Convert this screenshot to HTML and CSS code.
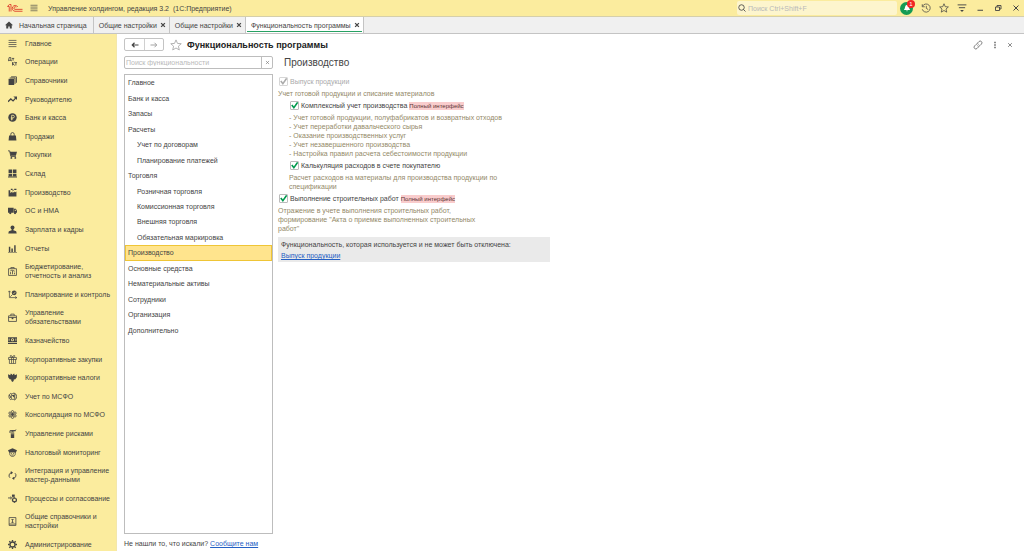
FILE: index.html
```html
<!DOCTYPE html>
<html lang="ru">
<head>
<meta charset="utf-8">
<meta name="viewport" content="width=device-width, initial-scale=1">
<title>Функциональность программы</title>
<link rel="stylesheet" href="styles.css">
</head>
<body>
<svg class="sprite" aria-hidden="true">
  <symbol id="menu" viewBox="0 0 16 16"><path d="M1 2.500h14M1 6.200h14M1 9.800h14M1 13.500h14" fill="none" stroke="currentColor" stroke-width="1.300"/></symbol>
  <symbol id="ops" viewBox="0 0 16 16"><path d="M0 7.500V6h1l1-5h3v5h1v1.500M1 6h4M7 2.500h4M9 2.500v4M8 9v6M12 9l-4 3 4 3M12 10h4M14 10v5" fill="none" stroke="currentColor" stroke-width="1.500"/></symbol>
  <symbol id="books" viewBox="0 0 16 16"><path d="M1 5h10v11H1z"/><path d="M3 3.500h9.500V14M5.500 1.500H15V12" fill="none" stroke="currentColor" stroke-width="1.600"/></symbol>
  <symbol id="trend" viewBox="0 0 16 16"><path d="M0 12l5-5 4 3.500L14 5" fill="none" stroke="currentColor" stroke-width="2.200"/><path d="M9.500 2.500H16V9z"/></symbol>
  <symbol id="coin" viewBox="0 0 16 16"><circle cx="8" cy="8" r="7.500"/><path d="M6.500 13V4h2.500a2.200 2.200 0 0 1 0 4.600H5M5 10.600h4" fill="none" stroke="#fbec9e" stroke-width="1.400"/></symbol>
  <symbol id="bag" viewBox="0 0 16 16"><path d="M2 6h12l1 9H1z"/><path d="M5 8V4a3 3 0 0 1 6 0v4" fill="none" stroke="currentColor" stroke-width="1.500"/></symbol>
  <symbol id="cart" viewBox="0 0 16 16"><path d="M3 3h13l-2 7H5z"/><path d="M0 1.500h3l2 10h9" fill="none" stroke="currentColor" stroke-width="1.500"/><circle cx="6" cy="14" r="1.700"/><circle cx="13" cy="14" r="1.700"/></symbol>
  <symbol id="store" viewBox="0 0 16 16"><path d="M1 1h6.300v6H1zM8.700 1H15v6H8.700zM1 8.300h6.300V13H1zM8.700 8.300H15V13H8.700zM0 13.500h16V15H0z"/></symbol>
  <symbol id="factory" viewBox="0 0 16 16"><path d="M1 15V4h3v5l4-3v3l4-3v2l3-2v9z"/><path d="M5 2.500h3M8 4h2M11 2.500h4" stroke="currentColor" stroke-width="2"/></symbol>
  <symbol id="truck" viewBox="0 0 16 16"><path d="M0 3h10v9H0zM10.500 5H14l2 3.500V12h-5.500z"/><circle cx="4" cy="12.500" r="2"/><circle cx="12.500" cy="12.500" r="2"/><path d="M12 6.500h1.500l1 2H12z" fill="#fbec9e"/></symbol>
  <symbol id="person" viewBox="0 0 16 16"><circle cx="8" cy="4.500" r="3.500"/><path d="M6.500 7h3v2.500l5 1.500 1 4H.5l1-4 5-1.500z"/></symbol>
  <symbol id="bars" viewBox="0 0 16 16"><path d="M1.500 5h2.600v9H1.500zM6 8h2.600v6H6zM11 2h2.600v12H11zM0 14h16v1.300H0z"/></symbol>
  <symbol id="plan" viewBox="0 0 16 16"><path d="M1 3h14v12H1zM5 3V1h6v2M4.500 13V9M8 13V7M11.500 13v-3M4 7l3-1.500 5 2" fill="none" stroke="currentColor" stroke-width="1.400"/></symbol>
  <symbol id="target" viewBox="0 0 16 16"><path d="M2.500 2v11.500H16M.5 4l2-2.500 2 2.500M13 11.500l2.500 2-2.500 2M4 12l4-4" fill="none" stroke="currentColor" stroke-width="1.300"/><circle cx="11" cy="5" r="4.300"/><path d="M9 5l1.500 1.500L13.500 3" fill="none" stroke="#fbec9e" stroke-width="1.200"/></symbol>
  <symbol id="case" viewBox="0 0 16 16"><path d="M1 5h14v10H1zM5 5V2h6v3M1 8h14" fill="none" stroke="currentColor" stroke-width="1.400"/><path d="M6.500 8h3v3h-3z"/></symbol>
  <symbol id="cash" viewBox="0 0 16 16"><path d="M0 2h16v9H0zM0 12.500h16V14H0z"/><circle cx="8" cy="6.500" r="2.700" fill="#fbec9e"/><circle cx="8" cy="6.500" r="1.300"/><path d="M2 4.500v4M14 4.500v4" stroke="#fbec9e" stroke-width="1.400"/></symbol>
  <symbol id="gift" viewBox="0 0 16 16"><path d="M1 4.500h14V8H1zM2.500 8v7.300h11V8M6.300 5v10M9.700 5v10M8 4C3 4 3 .7 5 .7S8 4 8 4s1-3.300 3-3.300S13 4 8 4z" fill="none" stroke="currentColor" stroke-width="1.300"/></symbol>
  <symbol id="eagle" viewBox="0 0 16 16"><path d="M0 2l4 2 1-3 2 1 1 2 1-2 2-1 1 3 4-2-.5 6-3 3.500-2-.5L10 14l-2 2-2-2-.5-3-2 .5-3-3.500z"/></symbol>
  <symbol id="globe" viewBox="0 0 16 16"><path d="M5 2A7 7 0 0 0 5 14M10 1.500a6.800 6.800 0 0 1 1 13M1.500 6l3 1.500v3" fill="none" stroke="currentColor" stroke-width="1.500"/><path d="M6 3h6v10H6z" fill="#fbec9e" stroke="currentColor" stroke-width="1.300"/><path d="M6.500 5.500l5 5v-5z"/></symbol>
  <symbol id="atom" viewBox="0 0 16 16"><circle cx="8" cy="8" r="2.500"/><g fill="none" stroke="currentColor" stroke-width="1.400"><circle cx="8" cy="3" r="2"/><circle cx="8" cy="13" r="2"/><circle cx="3.500" cy="5.500" r="2"/><circle cx="12.500" cy="5.500" r="2"/><circle cx="3.500" cy="10.500" r="2"/><circle cx="12.500" cy="10.500" r="2"/></g></symbol>
  <symbol id="risk" viewBox="0 0 16 16"><path d="M5 6h6v10H5zM6 2h4v3H6z"/><path d="M3.500 7V3H12l2-2M10 3h4" fill="none" stroke="currentColor" stroke-width="1.700"/><path d="M5 8.500h6" stroke="#fbec9e"/></symbol>
  <symbol id="officer" viewBox="0 0 16 16"><path d="M0 4l8-3.500L16 4l-2 4H2z"/><path d="M3 7v3c0 3 2 5 5 5s5-2 5-5V7M5 10h2M9 10h2M6 12.500h4" fill="none" stroke="currentColor" stroke-width="1.400"/></symbol>
  <symbol id="sync" viewBox="0 0 16 16"><path d="M6 3a5.300 5.300 0 0 0-2.500 9M10 13a5.300 5.300 0 0 0 2.500-9" fill="none" stroke="currentColor" stroke-width="1.700"/><path d="M5 0l4 3-4 3zM11 16l-4-3 4-3z"/></symbol>
  <symbol id="process" viewBox="0 0 16 16"><path d="M0 7h6M4 5l2.500 2L4 9M9 7V4" fill="none" stroke="currentColor" stroke-width="1.500"/><path d="M7 1h5v4H7z"/><circle cx="11.500" cy="10.500" r="3.500" fill="none" stroke="currentColor" stroke-width="2"/><path d="M11.500 5.500v3M11.500 12.500V16M6.500 10.500h3M13.500 10.500h2.500" stroke="currentColor" stroke-width="1.300"/></symbol>
  <symbol id="book" viewBox="0 0 16 16"><path d="M2 1h12v14H2zM2 12.500h12M6 4.500h4M8 4.500V10M6 9.500h4" fill="none" stroke="currentColor" stroke-width="1.400"/></symbol>
  <symbol id="gear" viewBox="0 0 16 16"><circle cx="8" cy="8" r="4.500" fill="none" stroke="currentColor" stroke-width="2.400"/><path d="M8 0v3M8 13v3M0 8h3M13 8h3M2.300 2.300l2.200 2.200M11.500 11.500l2.200 2.200M2.300 13.700l2.200-2.200M11.500 4.500l2.200-2.200" stroke="currentColor" stroke-width="2.400"/></symbol>
  <symbol id="star" viewBox="0 0 16 16"><path d="M8 1.200l2 4.700 5 .4-3.800 3.300 1.200 5L8 12l-4.400 2.600 1.200-5L1 6.300l5-.4z" fill="none" stroke="currentColor" stroke-width="1.200"/></symbol>
  <symbol id="close" viewBox="0 0 16 16"><path d="M3 3l10 10M13 3L3 13" fill="none" stroke="currentColor" stroke-width="2"/></symbol>
  <symbol id="bold-close" viewBox="0 0 16 16"><path d="M3 3l10 10M13 3L3 13" fill="none" stroke="currentColor" stroke-width="3.500"/></symbol>
  <symbol id="left" viewBox="0 0 16 16"><path d="M15 8H3M7 3.500L2.500 8 7 12.500" fill="none" stroke="currentColor" stroke-width="2.400"/></symbol>
  <symbol id="right" viewBox="0 0 16 16"><path d="M1 8h12M9 3.500L13.500 8 9 12.500" fill="none" stroke="currentColor" stroke-width="1.800"/></symbol>
</svg>

<header class="titlebar">
  <svg class="brand" viewBox="0 0 32 20" role="img" aria-label="1С"><g fill="none" stroke="#dc3d2d" stroke-width="1.800"><path d="M1 6.500L5 3h3v14M1 7h3.500v10"/><path d="M21.500 8a5.800 5.800 0 1 0-5.500 8.500h15"/><path d="M18.500 8.500a2.600 2.600 0 1 0-2.500 4.200h15"/></g></svg>
  <button class="icon-button" aria-label="Меню"><svg class="icon"><use href="#menu"/></svg></button>
  <h1 class="app-name">Управление холдингом, редакция 3.2&nbsp; (1С:Предприятие)</h1>
  <label class="search">
    <svg class="icon" viewBox="0 0 16 16"><path d="M11 11l4 4M12.500 7a5.500 5.500 0 1 1-11 0 5.500 5.500 0 0 1 11 0z" fill="none" stroke="currentColor" stroke-width="1.700"/></svg>
    <input type="search" placeholder="Поиск Ctrl+Shift+F" aria-label="Поиск">
  </label>
  <nav class="tools" aria-label="Инструменты">
    <button class="bell" aria-label="Уведомления"><svg viewBox="0 0 16 16"><path d="M8 3c-3 0-3 3-3.500 5.500L3 11h10l-1.500-2.500C11 6 11 3 8 3zM6.500 12h3L8 13.500z" fill="#fff"/></svg><span class="badge">1</span></button>
    <button class="icon-button" aria-label="История"><svg class="icon-large" viewBox="0 0 16 16"><path d="M2.500 5A6.500 6.500 0 1 1 2 10M2 2v4h4M8.500 4.500v4l3 2" fill="none" stroke="currentColor" stroke-width="1.200"/></svg></button>
    <button class="icon-button" aria-label="Избранное"><svg class="icon-large"><use href="#star"/></svg></button>
    <button class="icon-button" aria-label="Настройки"><svg class="icon-large" viewBox="0 0 16 16"><path d="M1 3h14M3 7.500h10" stroke="currentColor" stroke-width="1.500"/><path d="M5 11h6l-3 3.500z"/></svg></button>
    <button class="icon-button" aria-label="Свернуть"><svg class="icon" viewBox="0 0 16 16"><path d="M3 12.500h11" stroke="currentColor" stroke-width="2"/></svg></button>
    <button class="icon-button" aria-label="Восстановить"><svg class="icon" viewBox="0 0 16 16"><path d="M3 6h8v7H3zM6 6V3h8v7h-3" fill="none" stroke="currentColor" stroke-width="1.800"/></svg></button>
    <button class="icon-button" aria-label="Закрыть"><svg class="icon"><use href="#close"/></svg></button>
  </nav>
</header>

<nav class="tabs" aria-label="Открытые окна">
  <a class="tab home" href="#"><svg class="icon" viewBox="0 0 16 16"><path d="M8 1l8 7.500h-2.500V15h-4v-4h-3v4h-4V8.500H0z"/></svg>Начальная страница</a>
  <a class="tab" href="#">Общие настройки<svg class="tab-close"><use href="#bold-close"/></svg></a>
  <a class="tab" href="#">Общие настройки<svg class="tab-close"><use href="#bold-close"/></svg></a>
  <a class="tab active" href="#" aria-current="page">Функциональность программы<svg class="tab-close"><use href="#bold-close"/></svg></a>
</nav>

<div class="workspace">
  <aside class="sidebar">
    <ul class="sections">
      <li><a href="#"><svg><use href="#menu"/></svg>Главное</a></li>
      <li><a href="#"><svg><use href="#ops"/></svg>Операции</a></li>
      <li><a href="#"><svg><use href="#books"/></svg>Справочники</a></li>
      <li><a href="#"><svg><use href="#trend"/></svg>Руководителю</a></li>
      <li><a href="#"><svg><use href="#coin"/></svg>Банк и касса</a></li>
      <li><a href="#"><svg><use href="#bag"/></svg>Продажи</a></li>
      <li><a href="#"><svg><use href="#cart"/></svg>Покупки</a></li>
      <li><a href="#"><svg><use href="#store"/></svg>Склад</a></li>
      <li><a href="#"><svg><use href="#factory"/></svg>Производство</a></li>
      <li><a href="#"><svg><use href="#truck"/></svg>ОС и НМА</a></li>
      <li><a href="#"><svg><use href="#person"/></svg>Зарплата и кадры</a></li>
      <li><a href="#"><svg><use href="#bars"/></svg>Отчеты</a></li>
      <li><a href="#"><svg><use href="#plan"/></svg>Бюджетирование,<br>отчетность и анализ</a></li>
      <li><a href="#"><svg><use href="#target"/></svg>Планирование и контроль</a></li>
      <li><a href="#"><svg><use href="#case"/></svg>Управление<br>обязательствами</a></li>
      <li><a href="#"><svg><use href="#cash"/></svg>Казначейство</a></li>
      <li><a href="#"><svg><use href="#gift"/></svg>Корпоративные закупки</a></li>
      <li><a href="#"><svg><use href="#eagle"/></svg>Корпоративные налоги</a></li>
      <li><a href="#"><svg><use href="#globe"/></svg>Учет по МСФО</a></li>
      <li><a href="#"><svg><use href="#atom"/></svg>Консолидация по МСФО</a></li>
      <li><a href="#"><svg><use href="#risk"/></svg>Управление рисками</a></li>
      <li><a href="#"><svg><use href="#officer"/></svg>Налоговый мониторинг</a></li>
      <li><a href="#"><svg><use href="#sync"/></svg>Интеграция и управление<br>мастер-данными</a></li>
      <li><a href="#"><svg><use href="#process"/></svg>Процессы и согласование</a></li>
      <li><a href="#"><svg><use href="#book"/></svg>Общие справочники и<br>настройки</a></li>
      <li><a href="#"><svg><use href="#gear"/></svg>Администрирование</a></li>
    </ul>
  </aside>

  <main class="page">
    <div class="page-head">
      <div class="history">
        <button aria-label="Назад"><svg class="icon"><use href="#left"/></svg></button>
        <button class="muted" aria-label="Вперед"><svg class="icon"><use href="#right"/></svg></button>
      </div>
      <button class="favorite" aria-label="В избранное"><svg><use href="#star"/></svg></button>
      <h2 class="page-title">Функциональность программы</h2>
      <div class="page-tools">
        <button class="icon-button" aria-label="Ссылка"><svg class="icon-large" viewBox="0 0 16 16"><path d="M7 5l2.500-2.500a2.800 2.800 0 0 1 4 4L11 9a2.500 2.500 0 0 1-4 0M9 11l-2.500 2.500a2.800 2.800 0 0 1-4-4L5 7a2.500 2.500 0 0 1 4 0" fill="none" stroke="currentColor" stroke-width="1.300"/></svg></button>
        <button class="icon-button" aria-label="Еще"><svg class="icon" viewBox="0 0 16 16"><path d="M6.500 1.500h3v3h-3zM6.500 6.500h3v3h-3zM6.500 11.500h3v3h-3z"/></svg></button>
        <button class="icon-button" aria-label="Закрыть форму"><svg class="icon-small"><use href="#close"/></svg></button>
      </div>
    </div>

    <div class="columns">
      <section class="catalog">
        <div class="filter">
          <input type="text" placeholder="Поиск функциональности" aria-label="Поиск функциональности">
          <button aria-label="Очистить"><svg class="icon-small"><use href="#close"/></svg></button>
        </div>
        <div class="tree">
          <ul>
            <li><a href="#">Главное</a></li>
            <li><a href="#">Банк и касса</a></li>
            <li><a href="#">Запасы</a></li>
            <li><a href="#">Расчеты</a></li>
            <li class="child"><a href="#">Учет по договорам</a></li>
            <li class="child"><a href="#">Планирование платежей</a></li>
            <li><a href="#">Торговля</a></li>
            <li class="child"><a href="#">Розничная торговля</a></li>
            <li class="child"><a href="#">Комиссионная торговля</a></li>
            <li class="child"><a href="#">Внешняя торговля</a></li>
            <li class="child"><a href="#">Обязательная маркировка</a></li>
            <li class="selected"><a href="#" aria-current="true">Производство</a></li>
            <li><a href="#">Основные средства</a></li>
            <li><a href="#">Нематериальные активы</a></li>
            <li><a href="#">Сотрудники</a></li>
            <li><a href="#">Организация</a></li>
            <li><a href="#">Дополнительно</a></li>
          </ul>
        </div>
        <p class="feedback">Не нашли то, что искали? <a href="#">Сообщите нам</a></p>
      </section>

      <section class="details">
        <h3>Производство</h3>
        <label class="option disabled"><input type="checkbox" checked disabled>Выпуск продукции</label>
        <p class="hint">Учет готовой продукции и списание материалов</p>
        <div class="nested">
          <label class="option"><input type="checkbox" checked>Комплексный учет производства <span class="tag">Полный интерфейс</span></label>
          <p class="hint">- Учет готовой продукции, полуфабрикатов и возвратных отходов<br>- Учет переработки давальческого сырья<br>- Оказание производственных услуг<br>- Учет незавершенного производства<br>- Настройка правил расчета себестоимости продукции</p>
          <label class="option"><input type="checkbox" checked>Калькуляция расходов в счете покупателю</label>
          <p class="hint">Расчет расходов на материалы для производства продукции по<br>спецификации</p>
        </div>
        <label class="option"><input type="checkbox" checked>Выполнение строительных работ <span class="tag">Полный интерфейс</span></label>
        <p class="hint">Отражение в учете выполнения строительных работ,<br>формирование "Акта о приемке выполненных строительных<br>работ"</p>
        <div class="notice">
          <p>Функциональность, которая используется и не может быть отключена:</p>
          <a href="#">Выпуск продукции</a>
        </div>
      </section>
    </div>
  </main>
</div>
</body>
</html>
```
FILE: styles.css
```css
* { box-sizing: border-box; }

body {
  display: flex;
  flex-direction: column;
  height: 100vh;
  margin: 0;
  overflow: hidden;
  background: #fff;
  color: #444;
  font: 7px/9px "Liberation Sans", Arial, sans-serif;
}

h1, h2, h3, p, ul { margin: 0; padding: 0; font-weight: 400; }
ul { list-style: none; }
a { color: inherit; text-decoration: none; }
svg { display: block; flex: none; fill: currentColor; }
button, input { margin: 0; padding: 0; border: 0; background: none; color: inherit; font: inherit; }
input:focus { outline: none; }
input::placeholder { color: #b9b9b9; opacity: 1; }

.sprite { position: absolute; width: 0; height: 0; }
.icon { width: 8px; height: 8px; }
.icon-large { width: 10px; height: 10px; }
.icon-small { width: 6px; height: 6px; }
.icon-button { display: grid; place-items: center; }

.titlebar {
  display: flex;
  flex: none;
  align-items: center;
  height: 16px;
  padding: 0 3px 0 7px;
  background: #fbec9e;
}
.brand { width: 16px; height: 10px; margin-right: 7px; }
.app-name { margin-left: 10px; font-size: 7px; }
.search {
  display: flex;
  align-items: center;
  gap: 2px;
  width: 160px;
  height: 14px;
  margin-left: auto;
  padding-left: 1px;
  border-radius: 2px;
  background: #fdf5cd;
}
.search input { flex: 1; min-width: 0; }
.tools { display: flex; align-items: center; gap: 8px; padding-left: 3px; }
.bell {
  position: relative;
  display: grid;
  place-items: center;
  width: 13px;
  height: 13px;
  border-radius: 50%;
  background: #149b54;
}
.bell svg { width: 10px; height: 10px; }
.badge {
  position: absolute;
  top: -2px;
  right: -2px;
  width: 8px;
  border-radius: 50%;
  background: #f12525;
  color: #fff;
  font-size: 6px;
  line-height: 8px;
}
.tools .icon { margin: 0 1px; }

.tabs {
  display: flex;
  flex: none;
  height: 18px;
  border-top: 1px solid #d5cfab;
  border-bottom: 1px solid #c4c4c4;
  background: #f0f0f0;
}
.tab {
  display: flex;
  align-items: center;
  gap: 3px;
  padding: 0 3px 0 5px;
  border-right: 1px solid #c4c4c4;
}
.tab.home { gap: 6px; padding-right: 6px; }
.tab.active {
  background: linear-gradient(#27a163, #27a163) center bottom 1px / calc(100% - 2px) 1px no-repeat #fff;
}
.tab-close { width: 6px; height: 6px; }

.workspace { display: flex; flex: 1; min-height: 0; }
.sidebar {
  display: flex;
  flex-direction: column;
  flex: none;
  width: 117px;
  overflow: hidden;
  border-right: 1px solid #f3e7ac;
  background: #fbec9e;
}
.sections {
  display: flex;
  flex: 1;
  flex-direction: column;
  justify-content: space-around;
  margin-bottom: -3px;
}
.sections a { display: grid; grid-template-columns: 9px 1fr; align-items: center; gap: 8px; padding-left: 8px; }
.sections svg { width: 9px; height: 9px; }

.page { display: flex; flex: 1; flex-direction: column; min-width: 0; padding: 4px 7px 3px; }
.page-head { display: flex; align-items: center; height: 13px; }
.history { display: flex; height: 13px; border: 1px solid #c4c4c4; border-radius: 2px; }
.history button { display: grid; place-items: center; width: 19px; }
.history button + button { border-left: 1px solid #d0d0d0; }
.history .muted { color: #999; }
.favorite { margin: 0 5px 0 6px; color: #aaa; }
.favorite svg { width: 12px; height: 12px; }
.page-title { color: #222; font-size: 9px; font-weight: 700; line-height: 12px; }
.page-tools { display: flex; align-items: center; gap: 8px; margin-left: auto; padding-right: 4px; color: #666; }

.columns { display: flex; flex: 1; gap: 5px; min-height: 0; padding-top: 5px; }
.catalog { display: flex; flex: none; flex-direction: column; width: 149px; }
.filter { display: flex; flex: none; height: 13px; border: 1px solid #bdbdbd; border-radius: 2px; }
.filter input { flex: 1; min-width: 0; padding-left: 1px; }
.filter button { display: grid; place-items: center; width: 11px; border-left: 1px solid #bdbdbd; color: #777; }
.filter .icon-small { width: 5px; height: 5px; }
.tree { flex: 1; min-height: 0; margin-top: 5px; border: 1px solid #bdbdbd; }
.tree ul { display: grid; grid-auto-rows: 1fr; height: 263px; }
.tree a { display: flex; align-items: center; height: 100%; padding-left: 3px; }
.tree .child a { padding-left: 12px; }
.tree .selected a { background: #ffe48d; box-shadow: inset 0 0 0 1px #efc536; }
.feedback { padding-top: 5px; }
.feedback a, .notice a { color: #2560c4; text-decoration: underline; }

.details { flex: 1; min-width: 0; }
.details h3 { padding-left: 6px; font-size: 10px; line-height: 13px; }
.option { display: flex; align-items: center; gap: 2px; height: 9px; }
.details h3 + .option { margin-top: 8px; }
.option input {
  appearance: none;
  width: 9px;
  height: 9px;
  border: 1px solid #bbb;
  border-radius: 1px;
  background: url("data:image/svg+xml,%3Csvg xmlns='http://www.w3.org/2000/svg' viewBox='0 0 10 10'%3E%3Cpath d='M2 4.500l2.300 3L8.500 1.500' fill='none' stroke='%23009a4e' stroke-width='1.800'/%3E%3C/svg%3E") center / 9px no-repeat;
}
.details .option { padding-left: 1px; }
.option.disabled { color: #aaa; }
.option.disabled input { filter: grayscale(1); opacity: .6; }
.tag { background: #f9cccc; color: #5b3434; font-size: 6px; line-height: 8px; }
.hint { padding: 3px 0; color: #938968; }
.nested { padding-left: 11px; }
.notice { max-width: 272px; margin-top: 1px; padding: 3px 3px 2px; background: #eaeaea; }
.notice a { display: inline-block; margin-top: 2px; }
```
